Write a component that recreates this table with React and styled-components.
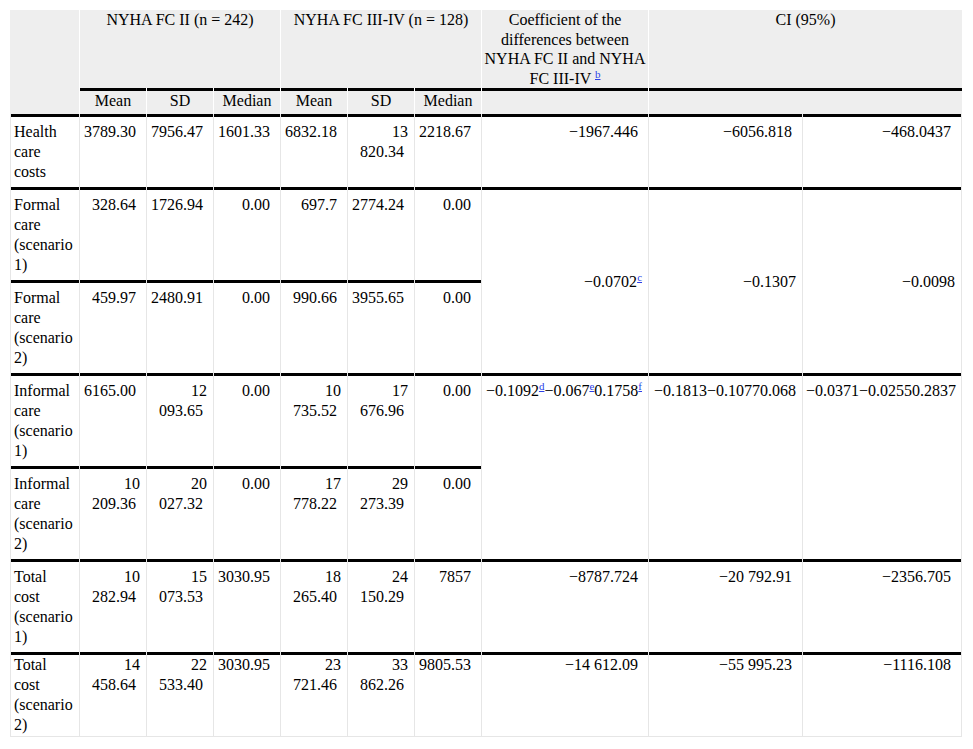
import React from 'react';
import styled, { createGlobalStyle } from 'styled-components';

const GlobalStyle = createGlobalStyle`
  body {
    margin: 10px;
    background: #fff;
    color: #000;
    font-family: "Liberation Serif", "Times New Roman", serif;
    font-size: 16px;
  }
`;

const Table = styled.table`
  width: 952px;
  table-layout: fixed;
  border-collapse: separate;
  border-spacing: 0;
  font-family: "Liberation Serif", "Times New Roman", serif;
  font-size: 16px;
  line-height: 20px;
  color: #000;
`;

const Head = styled.th`
  font-family: "Liberation Serif", "Times New Roman", serif;
  font-size: 16px;
  background: #eee;
  font-weight: normal;
  text-align: center;
  vertical-align: top;
  line-height: 19.5px;
  padding: ${(p) => (p.$sub ? '3px 2px 3.5px' : '0 2px')};
  border-left: ${(p) => (p.$first ? 'none' : '1px solid #fff')};
  box-shadow: ${(p) => (p.$sub ? 'inset 0 3px 0 #000' : 'none')};
`;

const Cell = styled.td`
  font-family: "Liberation Serif", "Times New Roman", serif;
  font-size: 16px;
  text-align: ${(p) => (p.$label ? 'left' : 'right')};
  vertical-align: ${(p) => (p.$mid ? 'middle' : 'top')};
  padding: ${(p) => (p.$tight ? '3px 6px 1px 3px' : '8px 6px 5px 3px')};
  border-left: 1px solid #e6e6e6;
  border-right: ${(p) => (p.$end ? '1px solid #e6e6e6' : 'none')};
  border-bottom: ${(p) => (p.$tight ? '1px solid #e6e6e6' : 'none')};
  box-shadow: inset 0 3px 0 #000;
`;

const Note = styled.sup`
  font-size: 11px;
  line-height: 0;
  vertical-align: 6px;

  a {
    color: #2b3fe8;
    text-decoration: underline;
  }
`;

const NBSP = '\u00a0';

const body = [
  {
    label: 'Health care costs',
    nums: ['3789.30', '7956.47', '1601.33', '6832.18', '13 820.34', '2218.67'],
    tail: [{ v: '−1967.446' + NBSP }, { v: '−6056.818' + NBSP }, { v: '−468.0437' + NBSP }],
  },
  {
    label: 'Formal care (scenario 1)',
    nums: ['328.64', '1726.94', '0.00', '697.7', '2774.24', '0.00'],
    tail: [
      { parts: [['−0.0702', 'c']], span: 2, mid: true },
      { v: '−0.1307', span: 2, mid: true },
      { v: '−0.0098', span: 2, mid: true },
    ],
  },
  {
    label: 'Formal care (scenario 2)',
    nums: ['459.97', '2480.91', '0.00', '990.66', '3955.65', '0.00'],
  },
  {
    label: 'Informal care (scenario 1)',
    nums: ['6165.00', '12 093.65', '0.00', '10 735.52', '17 676.96', '0.00'],
    tail: [
      { parts: [['−0.1092', 'd'], ['−0.067', 'e'], ['0.1758', 'f']], span: 2 },
      { v: '−0.1813−0.10770.068', span: 2 },
      { v: '−0.0371−0.02550.2837', span: 2 },
    ],
  },
  {
    label: 'Informal care (scenario 2)',
    nums: ['10 209.36', '20 027.32', '0.00', '17 778.22', '29 273.39', '0.00'],
  },
  {
    label: 'Total cost (scenario 1)',
    nums: ['10 282.94', '15 073.53', '3030.95', '18 265.40', '24 150.29', '7857'],
    tail: [{ v: '−8787.724' + NBSP }, { v: '−20 792.91' + NBSP }, { v: '−2356.705' + NBSP }],
  },
  {
    label: 'Total cost (scenario 2)',
    nums: ['14 458.64', '22 533.40', '3030.95', '23 721.46', '33 862.26', '9805.53'],
    tail: [{ v: '−14 612.09' + NBSP }, { v: '−55 995.23' + NBSP }, { v: '−1116.108' + NBSP }],
  },
];

const widths = [69, 67, 67, 67, 67, 67, 67, 167, 154, 160];

function Footnote({ mark }) {
  return (
    <Note>
      <a href="#">{mark}</a>
    </Note>
  );
}

export default function App() {
  const last = body.length - 1;
  return (
    <>
      <GlobalStyle />
      <Table>
        <colgroup>
          {widths.map((w, i) => (
            <col key={i} style={{ width: w }} />
          ))}
        </colgroup>
        <thead>
          <tr>
            <Head $first rowSpan={2} />
            <Head colSpan={3}>NYHA FC II (n = 242)</Head>
            <Head colSpan={3}>NYHA FC III-IV (n = 128)</Head>
            <Head>
              Coefficient of the differences between NYHA FC II and NYHA FC III-IV <Footnote mark="b" />
            </Head>
            <Head colSpan={2}>CI (95%)</Head>
          </tr>
          <tr>
            {['Mean', 'SD', 'Median', 'Mean', 'SD', 'Median'].map((h, i) => (
              <Head $sub key={i}>
                {h}
              </Head>
            ))}
            <Head $sub />
            <Head $sub colSpan={2} />
          </tr>
        </thead>
        <tbody>
          {body.map((row, r) => (
            <tr key={r}>
              <Cell $label $tight={r === last}>
                {row.label}
              </Cell>
              {row.nums.map((n, i) => (
                <Cell key={i} $tight={r === last}>
                  {n + NBSP}
                </Cell>
              ))}
              {row.tail &&
                row.tail.map((t, i) => (
                  <Cell key={'t' + i} rowSpan={t.span} $mid={t.mid} $end={i === 2} $tight={r === last}>
                    {t.parts
                      ? t.parts.map(([v, m], k) => (
                          <React.Fragment key={k}>
                            {v}
                            <Footnote mark={m} />
                          </React.Fragment>
                        ))
                      : t.v}
                  </Cell>
                ))}
            </tr>
          ))}
        </tbody>
      </Table>
    </>
  );
}
